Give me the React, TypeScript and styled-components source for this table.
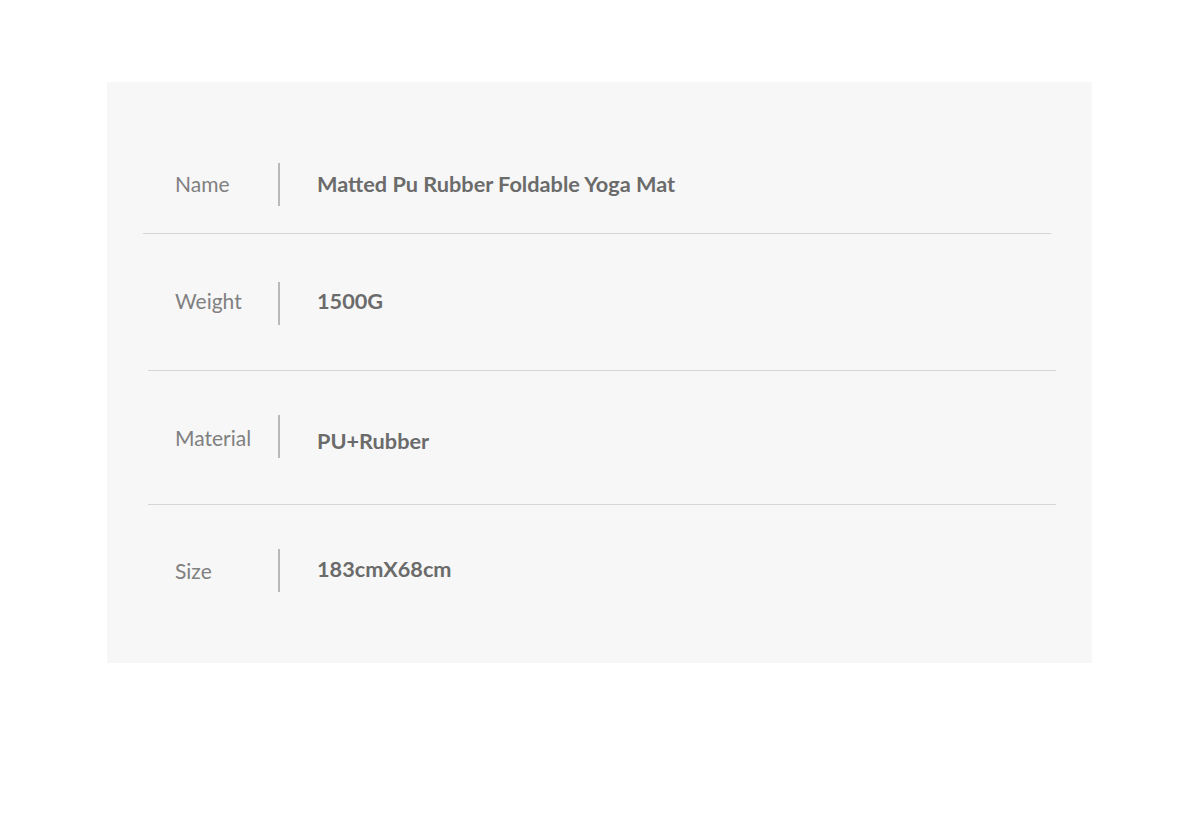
import React from "react";
import styled, { createGlobalStyle } from "styled-components";

const Global = createGlobalStyle`
  html, body { margin: 0; padding: 0; background: #ffffff; }
  body { font-family: "Source Sans Pro", Lato, "Open Sans", sans-serif; }
`;

const Page = styled.div`
  width: 1200px;
  height: 818px;
  padding: 82px 0 0 107px;
  box-sizing: border-box;
`;

const Panel = styled.section`
  width: 985px;
  height: 581px;
  background: #f7f7f7;
  box-sizing: border-box;
  display: flex;
  flex-direction: column;
  padding: 0 36px;
`;

const Row = styled.div<{ $top: number; $bottom: number }>`
  display: flex;
  align-items: center;
  padding: ${(p) => p.$top}px 0 ${(p) => p.$bottom}px;
`;

const Divider = styled.hr<{ $shift: number }>`
  height: 0;
  border: none;
  border-top: 1px solid #d6d6d6;
  margin: 0 ${(p) => 5 - p.$shift}px 0 ${(p) => p.$shift}px;
`;

const Label = styled.div<{ $dy: number }>`
  width: 135px;
  padding-left: 32px;
  box-sizing: border-box;
  font-size: 21px;
  font-weight: 400;
  color: #808080;
  line-height: 28px;
  position: relative;
  top: ${(p) => p.$dy}px;
`;

const Bar = styled.div`
  width: 2px;
  height: 43px;
  background: #b9b9b9;
  flex: none;
`;

const Value = styled.div<{ $dy: number }>`
  margin-left: 37px;
  font-size: 21.7px;
  font-weight: 700;
  color: #6b6b6b;
  line-height: 28px;
  position: relative;
  top: ${(p) => p.$dy}px;
`;

const rows = [
  { label: "Name", value: "Matted Pu Rubber Foldable Yoga Mat", top: 81, bottom: 27, shift: 0, ldy: -1, vdy: -1 },
  { label: "Weight", value: "1500G", top: 48, bottom: 45, shift: 0, ldy: -3, vdy: -3 },
  { label: "Material", value: "PU+Rubber", top: 44, bottom: 46, shift: 5, ldy: 1, vdy: 4 },
  { label: "Size", value: "183cmX68cm", top: 44, bottom: 70, shift: 5, ldy: 0, vdy: -2 },
];

export default function App() {
  return (
    <>
      <Global />
      <Page>
        <Panel>
          {rows.map((r, i) => (
            <React.Fragment key={r.label}>
              {i > 0 && <Divider $shift={r.shift} />}
              <Row $top={r.top} $bottom={r.bottom}>
                <Label $dy={r.ldy}>{r.label}</Label>
                <Bar />
                <Value $dy={r.vdy}>{r.value}</Value>
              </Row>
            </React.Fragment>
          ))}
        </Panel>
      </Page>
    </>
  );
}
